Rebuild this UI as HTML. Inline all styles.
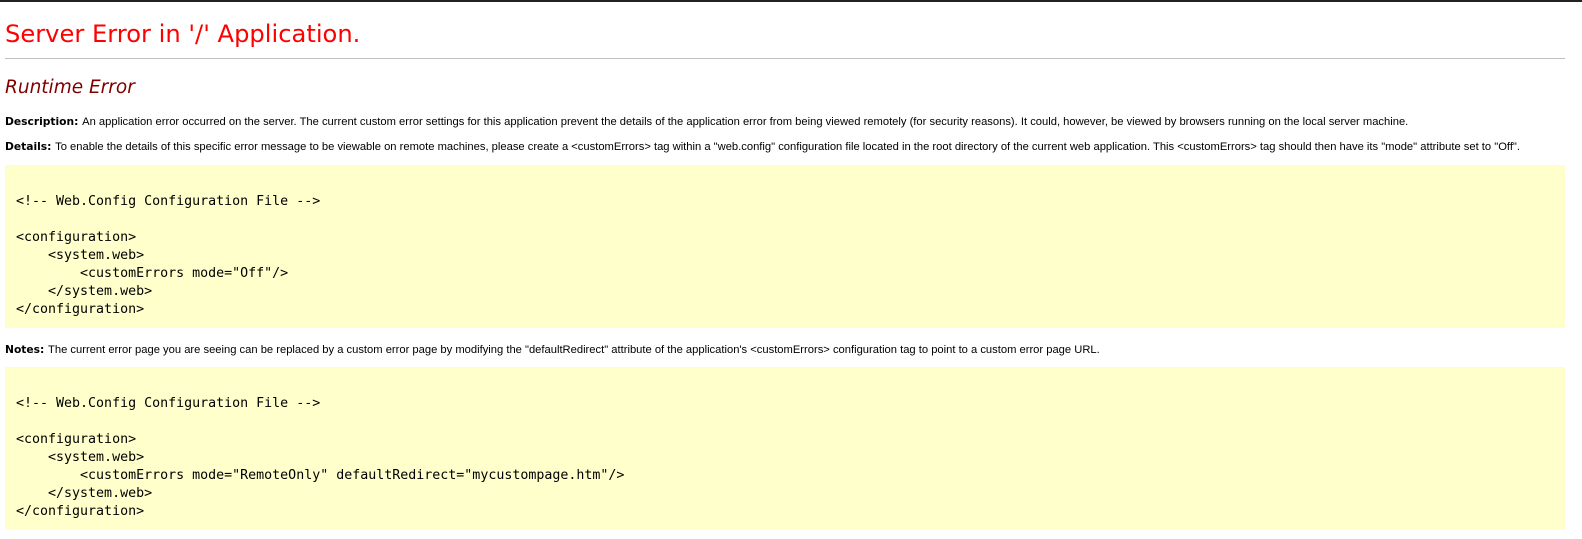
<!DOCTYPE html>
<html><head><meta charset="utf-8"><style>
html,body{margin:0;padding:0;background:#fff;}
body{width:1582px;height:539px;position:relative;overflow:hidden;font-family:"Liberation Sans",Arial,sans-serif;font-size:11.2px;color:#000;}
.top{position:absolute;left:0;top:0;width:1582px;height:2px;background:#222;}
.a{position:absolute;white-space:pre;}
h1{position:absolute;margin:0;left:5px;top:19px;font-family:"DejaVu Sans",Verdana,sans-serif;font-weight:normal;font-size:24.2px;color:#f00;line-height:30px;}
hr{position:absolute;margin:0;left:5px;top:58px;width:1560px;height:0;border:0;border-top:1px solid #c0c0c0;}
h2{position:absolute;margin:0;left:5px;top:76px;font-family:"DejaVu Sans",Verdana,sans-serif;font-weight:normal;font-style:italic;font-size:18.5px;color:#800000;line-height:24px;}
b{font-family:"DejaVu Sans",Verdana,sans-serif;font-size:10.7px;}
.box{position:absolute;left:5px;width:1560px;background:#ffffcc;}
pre{margin:0;font-family:"DejaVu Sans Mono","Liberation Mono",monospace;font-size:13.3px;line-height:18px;padding-left:11px;}
</style></head><body>
<div class="top"></div>
<h1>Server Error in '/' Application.</h1>
<hr>
<h2>Runtime Error</h2>
<div class="a" style="left:5px;top:115px;"><b>Description: </b>An application error occurred on the server. The current custom error settings for this application prevent the details of the application error from being viewed remotely (for security reasons). It could, however, be viewed by browsers running on the local server machine.</div>
<div class="a" style="left:5px;top:140px;"><b>Details: </b>To enable the details of this specific error message to be viewable on remote machines, please create a &lt;customErrors&gt; tag within a "web.config" configuration file located in the root directory of the current web application. This &lt;customErrors&gt; tag should then have its "mode" attribute set to "Off".</div>
<div class="box" style="top:165px;height:163px;"><pre style="padding-top:28px;">&lt;!-- Web.Config Configuration File --&gt;

&lt;configuration&gt;
    &lt;system.web&gt;
        &lt;customErrors mode="Off"/&gt;
    &lt;/system.web&gt;
&lt;/configuration&gt;</pre></div>
<div class="a" style="left:5px;top:343px;"><b>Notes: </b>The current error page you are seeing can be replaced by a custom error page by modifying the "defaultRedirect" attribute of the application's &lt;customErrors&gt; configuration tag to point to a custom error page URL.</div>
<div class="box" style="top:367px;height:163px;"><pre style="padding-top:28px;">&lt;!-- Web.Config Configuration File --&gt;

&lt;configuration&gt;
    &lt;system.web&gt;
        &lt;customErrors mode="RemoteOnly" defaultRedirect="mycustompage.htm"/&gt;
    &lt;/system.web&gt;
&lt;/configuration&gt;</pre></div>
</body></html>
